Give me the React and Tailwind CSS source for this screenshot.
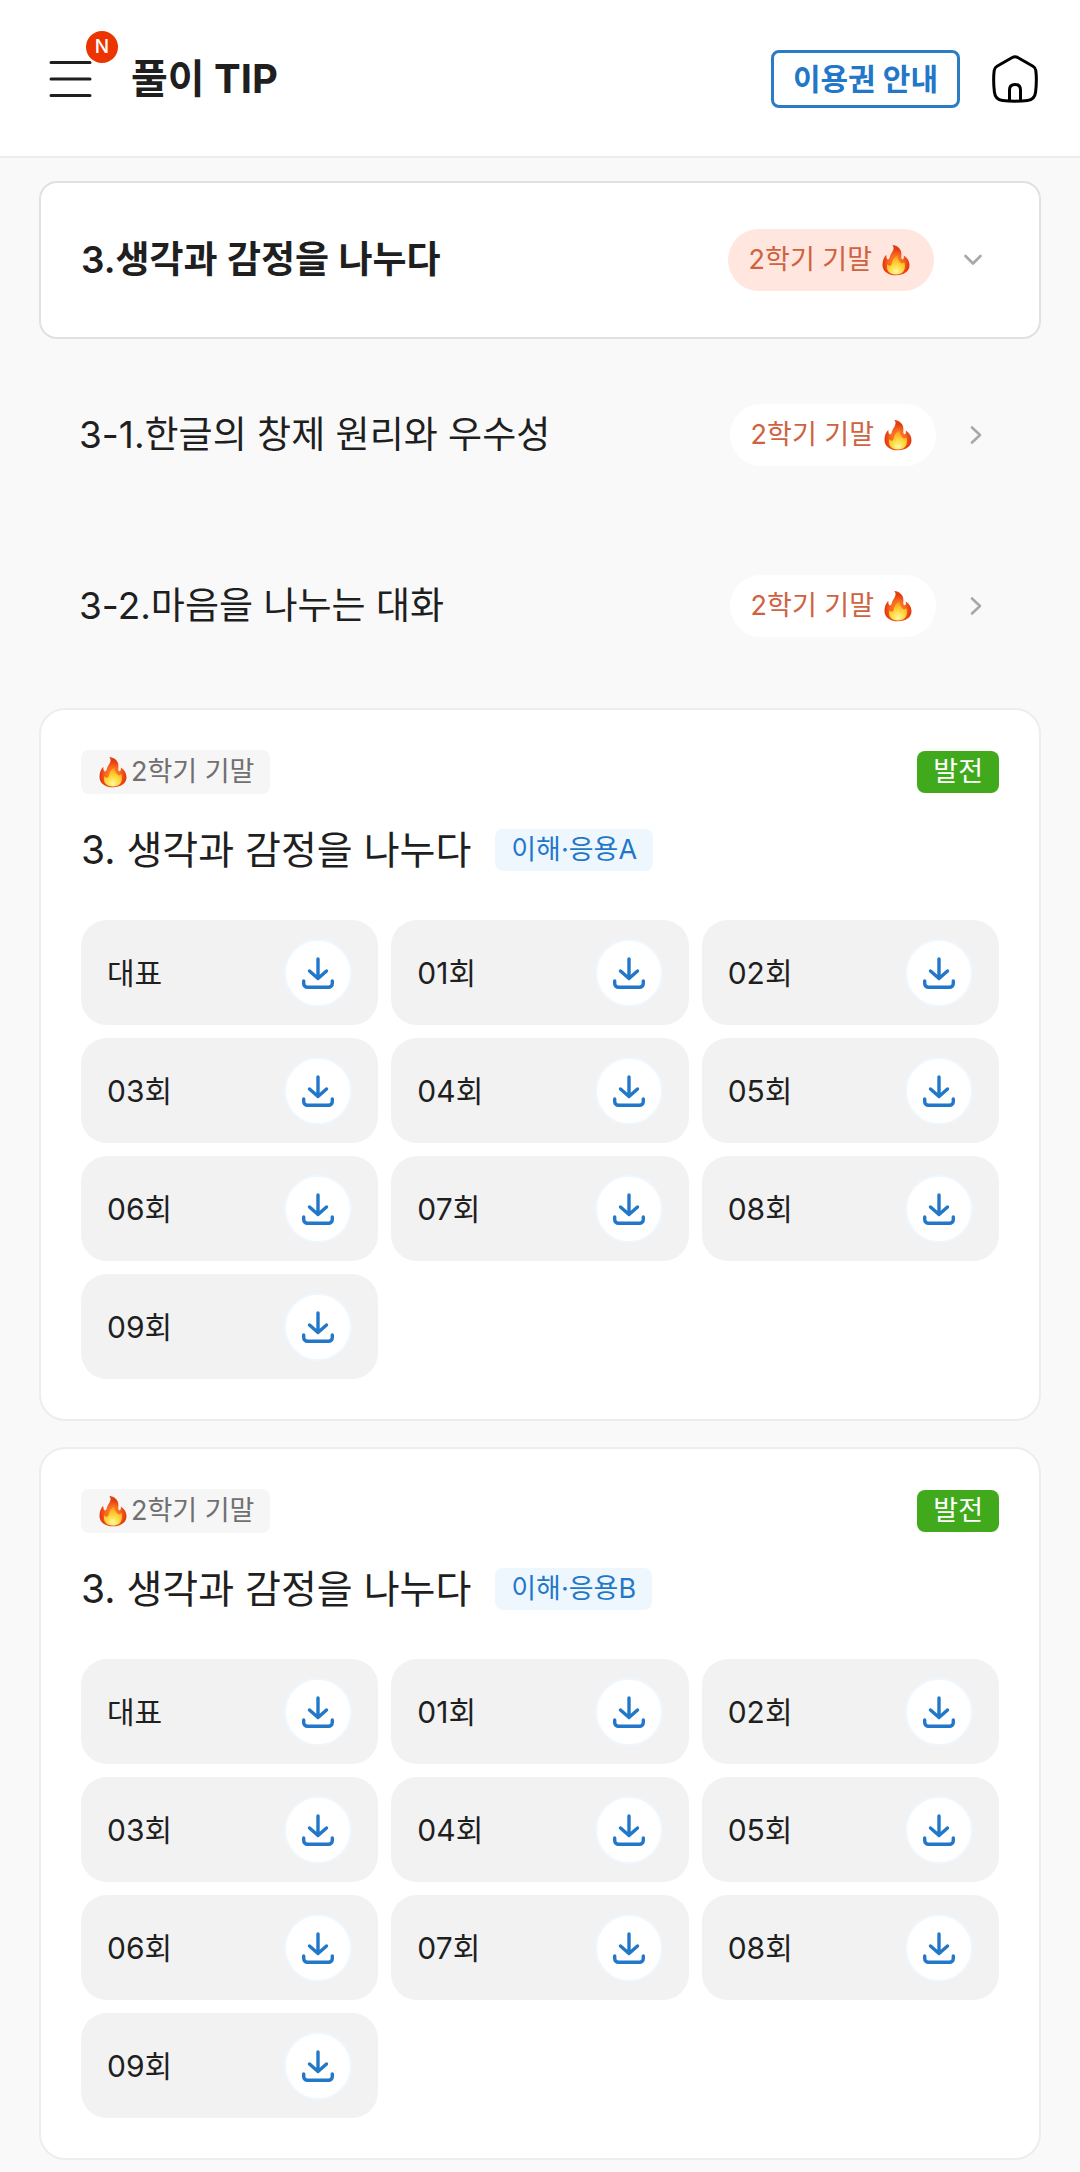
import { useState } from "react"

const subUnits = ["3-1.한글의 창제 원리와 우수성", "3-2.마음을 나누는 대화"]

const rounds = ["대표", "01회", "02회", "03회", "04회", "05회", "06회", "07회", "08회", "09회"]

const worksheets = [
    { id: "a", term: "2학기 기말", level: "발전", title: "3. 생각과 감정을 나누다", type: "이해·응용A" },
    { id: "b", term: "2학기 기말", level: "발전", title: "3. 생각과 감정을 나누다", type: "이해·응용B" },
]

function FlameDefs() {
    return (
        <svg width="0" height="0" className="absolute" aria-hidden="true">
            <defs>
                <radialGradient id="flameOuter" cx="0.5" cy="0.6" r="0.62">
                    <stop offset="0" stopColor="#ff8a1f" />
                    <stop offset="0.45" stopColor="#f76a20" />
                    <stop offset="0.75" stopColor="#e63a10" />
                    <stop offset="1" stopColor="#d9480f" />
                </radialGradient>
                <radialGradient id="flameInner" cx="0.5" cy="0.85" r="0.8">
                    <stop offset="0" stopColor="#fff7a8" />
                    <stop offset="0.4" stopColor="#ffdf45" />
                    <stop offset="0.8" stopColor="#ffb528" />
                    <stop offset="1" stopColor="#fd941e" />
                </radialGradient>
            </defs>
        </svg>
    )
}

function Flame() {
    return (
        <svg viewBox="0 0 28 32" className="h-8 w-7 shrink-0" aria-hidden="true">
            <path
                d="M10.2 1C15.6 1.300 19.800 5.200 19.400 10.600C19.300 12.500 19 14.200 20.200 15.200C21.600 15.600 22.200 13.800 21.800 11.400C25.600 13.600 27.600 17.600 27.500 21.600C27.300 27.600 21.800 31.300 14 31.300C6.200 31.300 .7 27.400 .5 21.200C.4 17.400 1.600 13.400 4.400 10.800C4.100 13.200 4.800 15.400 6.200 15.400C7.600 15.200 7.700 12.600 8.800 10.500C10.200 7.800 13.400 4.600 10.200 1Z"
                fill="url(#flameOuter)"
            />
            <path
                d="M15.600 11.500C15.400 15 17 17.200 18.800 18.800C20 19.800 21.400 19.200 22.200 18C24 22.600 23.200 30.400 14.200 30.500C5.600 30.400 4 24.600 5.400 20C6.200 21.400 7.400 22 8.600 21.400C9.900 20.700 9.800 19 10.400 17.200C11.200 14.800 12.800 12.600 15.600 11.500Z"
                fill="url(#flameInner)"
            />
        </svg>
    )
}

function DownloadIcon() {
    return (
        <svg
            viewBox="0 0 32 32"
            className="size-8"
            fill="none"
            stroke="currentColor"
            strokeWidth="3.4"
            strokeLinecap="round"
            strokeLinejoin="round"
            aria-hidden="true"
        >
            <path d="M16 2V21M7.500 14L16 21.600L24.500 14" />
            <path d="M1.700 24V26.500A3.800 3.800 0 0 0 5.500 30.300H26.500A3.800 3.800 0 0 0 30.300 26.500V24" />
        </svg>
    )
}

function Chevron({ open }) {
    return (
        <svg
            viewBox="0 0 24 24"
            className="size-6"
            fill="none"
            stroke="#a8a8a8"
            strokeWidth="2.6"
            strokeLinecap="round"
            strokeLinejoin="round"
            aria-hidden="true"
        >
            <path d={open ? "M4.500 8L12 15.500L19.500 8" : "M9 4.500L17 12L9 19.500"} />
        </svg>
    )
}

function Header() {
    return (
        <header className="flex items-center justify-between border-b-2 border-[#ececec] bg-white pt-[49px] pr-[42px] pb-[47px] pl-12">
            <div className="flex items-center gap-[38px]">
                <button type="button" aria-label="메뉴" className="relative flex h-[60px] items-center">
                    <svg
                        viewBox="0 0 45 36"
                        className="h-9 w-[45px]"
                        stroke="#1f1f1f"
                        strokeWidth="3"
                        strokeLinecap="round"
                        aria-hidden="true"
                    >
                        <path d="M3 1.500H42M3 18H42M3 34.500H42" />
                    </svg>
                    <span className="absolute -top-[18px] left-[38px] flex size-8 items-center justify-center rounded-full bg-[#eb3400] text-[19px] font-medium text-white">
                        N
                    </span>
                </button>
                <h1 className="text-[40px] leading-[60px] font-bold">풀이 TIP</h1>
            </div>
            <div className="flex items-center gap-8">
                <a
                    href="#pass"
                    className="flex h-[58px] items-center rounded-lg border-3 border-[#2c7cc4] px-[19px] text-[30px] leading-[44px] font-bold text-[#2277c9]"
                >
                    이용권 안내
                </a>
                <a href="#home" aria-label="홈">
                    <svg
                        viewBox="0 0 46 48"
                        className="h-12 w-[46px]"
                        fill="none"
                        stroke="#000"
                        strokeWidth="3"
                        strokeLinejoin="round"
                        aria-hidden="true"
                    >
                        <path d="M20.300 2.500Q23 1 25.700 2.500L41 11.200Q43.500 12.700 43.800 15.500Q45 25 43.600 37Q42.800 44.600 35.500 45.500Q23 46.800 10.500 45.500Q3.200 44.600 2.400 37Q1 25 2.200 15.500Q2.500 12.700 5 11.200Z" />
                        <path d="M17.500 46V35Q17.500 29.500 23 29.500Q28.500 29.500 28.500 35V46" />
                    </svg>
                </a>
            </div>
        </header>
    )
}

function TermPill({ active }) {
    return (
        <span
            className={`flex h-[62px] items-center gap-[10px] rounded-full pr-6 pl-[21px] text-[27px] leading-10 text-[#cf623f] ${active ? "bg-[#ffe6df]" : "bg-white"}`}
        >
            2학기 기말
            <Flame />
        </span>
    )
}

function Worksheet({ sheet }) {
    return (
        <section className="rounded-[26px] border-2 border-[#ededed] bg-white p-10">
            <div className="flex items-center justify-between">
                <span className="flex h-11 items-center gap-1 rounded-lg bg-[#f6f6f6] pr-4 pl-[18px] text-[27px] leading-10 text-[#707070]">
                    <Flame />
                    {sheet.term}
                </span>
                <span className="flex h-[42px] items-center rounded-lg bg-[#41aa1c] px-4 text-[27px] leading-10 text-white">
                    {sheet.level}
                </span>
            </div>
            <div className="mt-[27px] mb-[41px] flex items-center gap-6">
                <h2 className="text-[39px] leading-[58px]">{sheet.title}</h2>
                <span className="flex h-[42px] items-center rounded-lg bg-[#eff7fe] px-4 text-[27px] leading-10 text-[#2277c9]">
                    {sheet.type}
                </span>
            </div>
            <ul className="grid grid-cols-3 gap-[13px]">
                {rounds.map((round) => (
                    <li
                        key={round}
                        className="flex h-[105px] items-center justify-between rounded-[26px] bg-[#f2f2f2] px-[26px] text-[30px] leading-[44px]"
                    >
                        {round}
                        <button
                            type="button"
                            aria-label={`${round} 다운로드`}
                            className="flex size-[68px] items-center justify-center rounded-full border-2 border-[#eff7fe] bg-white text-[#2277c9]"
                        >
                            <DownloadIcon />
                        </button>
                    </li>
                ))}
            </ul>
        </section>
    )
}

export default function App() {
    const [open, setOpen] = useState(true)

    return (
        <div className="min-h-screen bg-[#f9f9f9] pb-3 font-[Inter,'Noto_Sans_CJK_KR',sans-serif] text-[#1f1f1f]">
            <FlameDefs />
            <Header />
            <main className="px-[39px] pt-[23px]">
                <button
                    type="button"
                    aria-expanded={open}
                    onClick={() => setOpen(!open)}
                    className="flex h-[158px] w-full items-center justify-between rounded-[18px] border-2 border-[#e1e1e1] bg-white pr-[54px] pl-10 text-left"
                >
                    <span className="text-[37px] leading-[56px] font-semibold">3.생각과 감정을 나누다</span>
                    <span className="flex items-center gap-[27px]">
                        <TermPill active />
                        <Chevron open={open} />
                    </span>
                </button>
                {open && (
                    <nav className="pt-[10px] pb-[17px]">
                        {subUnits.map((unit) => (
                            <a
                                key={unit}
                                href="#unit"
                                className="flex h-[171px] items-center justify-between pr-[54px] pl-10"
                            >
                                <span className="text-[37px] leading-[56px]">{unit}</span>
                                <span className="flex items-center gap-[27px]">
                                    <TermPill />
                                    <Chevron />
                                </span>
                            </a>
                        ))}
                    </nav>
                )}
                <div className="space-y-[26px]">
                    {worksheets.map((sheet) => (
                        <Worksheet key={sheet.id} sheet={sheet} />
                    ))}
                </div>
            </main>
        </div>
    )
}
